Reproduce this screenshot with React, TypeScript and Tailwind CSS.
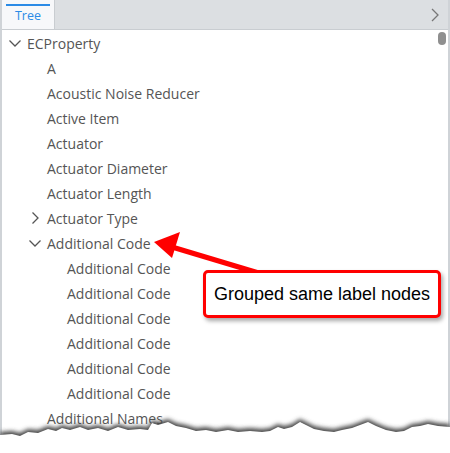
type Row = { label: string; level: number; toggle?: "open" | "closed" };

const rows: Row[] = [
  { label: "ECProperty", level: 0, toggle: "open" },
  { label: "A", level: 1 },
  { label: "Acoustic Noise Reducer", level: 1 },
  { label: "Active Item", level: 1 },
  { label: "Actuator", level: 1 },
  { label: "Actuator Diameter", level: 1 },
  { label: "Actuator Length", level: 1 },
  { label: "Actuator Type", level: 1, toggle: "closed" },
  { label: "Additional Code", level: 1, toggle: "open" },
  { label: "Additional Code", level: 2 },
  { label: "Additional Code", level: 2 },
  { label: "Additional Code", level: 2 },
  { label: "Additional Code", level: 2 },
  { label: "Additional Code", level: 2 },
  { label: "Additional Code", level: 2 },
  { label: "Additional Names", level: 1 },
];

const indent = ["pl-[25px]", "pl-[45px]", "pl-[65px]"];

function Toggle({ open }: { open: boolean }) {
  return (
    <svg width="14" height="14" viewBox="0 0 14 14" fill="none" stroke="#555" strokeWidth="1.3">
      {open ? <polyline points="1.5,4.5 7,10 12.5,4.5" /> : <polyline points="4.5,1.5 10,7 4.5,12.5" />}
    </svg>
  );
}

function TreeRow({ row }: { row: Row }) {
  return (
    <div className={`relative h-[25px] flex items-center ${indent[row.level]}`}>
      {row.toggle && (
        <span className="absolute top-[5px] -ml-[19px]">
          <Toggle open={row.toggle === "open"} />
        </span>
      )}
      <span className="text-[14px] text-[#555] leading-none whitespace-nowrap">{row.label}</span>
    </div>
  );
}

const edge =
  "M0,14 L12,13 L20,15 L28,11 L38,12 L48,8 L56,10 L62,7 L70,9 L80,6 L88,9 L98,7 L108,10 L118,6 L128,9 L140,8 L148,9 L152,2 L158,4 L168,1 L176,5 L186,7 L196,10 L206,9 L216,11 L228,9 L238,11 L250,10 L262,11 L270,10 L278,6 L284,8 L292,6 L300,1 L306,4 L314,8 L324,10 L334,11 L342,9 L352,7 L360,4 L368,1 L376,5 L386,9 L396,11 L404,10 L412,6 L420,5 L428,3 L438,5 L450,6 L450,40 L0,40 Z";

export default function App() {
  return (
    <div className="relative w-[450px] h-[453px] overflow-hidden bg-white font-['Open_Sans',sans-serif]">
      <div className="h-full border-l-2 border-r-2 border-[#cfd3d7]">
        {/* tab strip */}
        <div className="flex h-[30px] bg-[#dcdfe2] border-b border-[#c9cdd1]">
          <div className="w-[53px] pt-[4px] bg-[#f7f8fa] border-r border-[#c9cdd1]">
            <div className="mx-[4px] h-[2px] bg-[#2b8be6]" />
            <div className="text-center text-[12.5px] text-[#2b8be6] leading-[20px]">Tree</div>
          </div>
          <div className="flex-1" />
          <div className="w-[26px] flex items-center justify-center">
            <svg width="10" height="16" viewBox="0 0 10 16" fill="none" stroke="#777" strokeWidth="1.3">
              <polyline points="2,2 8,8 2,14" />
            </svg>
          </div>
        </div>

        <div className="relative pt-[1px]">
          {rows.map((r, i) => (
            <TreeRow key={i} row={r} />
          ))}
          <div className="absolute right-[2px] top-[2px] w-[8px] h-[13px] rounded-full bg-[#8f8f8f]" />
        </div>
      </div>

      {/* callout arrow */}
      <svg className="absolute left-0 top-0" width="450" height="453">
        <line x1="262" y1="274" x2="172" y2="247" stroke="#ff0000" strokeWidth="5" />
        <polygon points="154,242 180,232 172,258" fill="#ff0000" />
      </svg>

      {/* callout box */}
      <div className="absolute left-[203px] top-[270px] w-[238px] h-[48px] rounded-[5px] border-[3px] border-[#ff0000] bg-white shadow-[2px_3px_4px_rgba(0,0,0,0.35)] flex items-center justify-center">
        <span className="text-[18px] text-black font-['Liberation_Sans',sans-serif]">
          Grouped same label nodes
        </span>
      </div>

      {/* torn edge */}
      <svg className="absolute left-0 bottom-0" width="450" height="40" viewBox="0 0 450 40">
        <defs>
          <filter id="sh" x="-5%" y="-50%" width="110%" height="200%">
            <feGaussianBlur stdDeviation="2" />
          </filter>
        </defs>
        <path d={edge} fill="#4a4a4a" filter="url(#sh)" transform="translate(0,5)" />
        <path d={edge} fill="#ffffff" transform="translate(0,8)" />
      </svg>
    </div>
  );
}
